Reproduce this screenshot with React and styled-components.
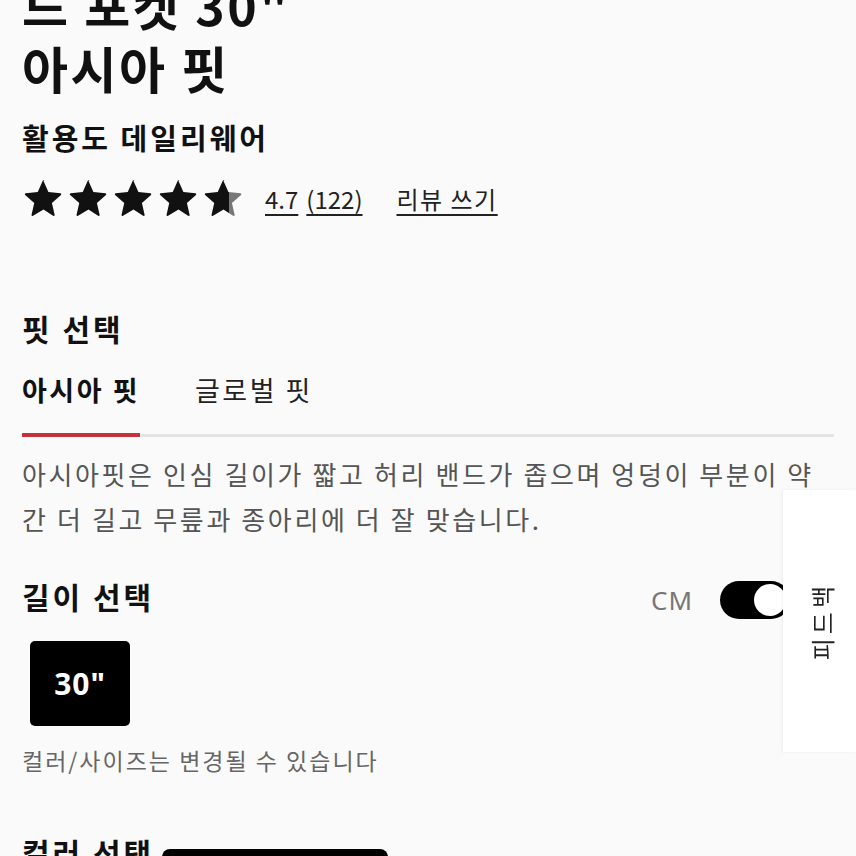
import React from "react"
import styled, { createGlobalStyle } from "styled-components"

const GlobalStyle = createGlobalStyle`
	html, body {
		margin: 0;
		padding: 0;
		background: #fafafa;
	}
	body {
		font-family: "Noto Sans CJK KR", "Noto Sans", sans-serif;
		color: #111;
		overflow: hidden;
	}
`

const Page = styled.div`
	padding: 0 22px;
	width: 856px;
	height: 856px;
	box-sizing: border-box;
	overflow: hidden;
`

const Title = styled.h1`
	margin: -27px 0 0;
	font-size: 50px;
	line-height: 63px;
	font-weight: 700;
	letter-spacing: 2.5px;
`

const SubTitle = styled.h2`
	margin: 18px 0 0;
	font-size: 29px;
	line-height: 40px;
	font-weight: 700;
	letter-spacing: 3px;
`

const RatingRow = styled.div`
	display: flex;
	align-items: center;
	margin-top: 17px;
	height: 48px;
`

const Stars = styled.div`
	display: flex;
	gap: 2px;
	margin-right: 20px;
`

const LinkText = styled.a`
	font-size: 24px;
	color: #222;
	letter-spacing: ${(p) => p.$spacing ?? 0}px;
	text-decoration: underline;
	text-underline-offset: 5px;
	text-decoration-thickness: 1.5px;
	margin-right: ${(p) => p.$gap || 0}px;
`

const SectionTitle = styled.h3`
	margin: ${(p) => p.$top}px 0 0;
	font-size: 30px;
	line-height: 40px;
	font-weight: 700;
	letter-spacing: 3px;
	white-space: nowrap;
`

const Tabs = styled.div`
	display: flex;
	margin-top: 22px;
	border-bottom: 3px solid #e4e4e4;
`

const Tab = styled.div`
	font-size: 27px;
	line-height: 40px;
	letter-spacing: 2.5px;
	padding-bottom: 23px;
	margin-bottom: -3px;
	font-weight: ${(p) => (p.$active ? 700 : 400)};
	color: ${(p) => (p.$active ? "#111" : "#222")};
	border-bottom: 4px solid ${(p) => (p.$active ? "#c6323c" : "transparent")};
	margin-right: ${(p) => (p.$active ? 55 : 0)}px;
`

const Description = styled.p`
	margin: 14px 0 0;
	font-size: 26px;
	line-height: 45px;
	color: #555;
	letter-spacing: 2.6px;
`

const LengthRow = styled.div`
	display: flex;
	align-items: center;
	justify-content: space-between;
	margin-top: 32px;
	padding-right: 44px;
`

const UnitGroup = styled.div`
	display: flex;
	align-items: center;
	gap: 27px;
	margin-top: 8px;
`

const Unit = styled.span`
	font-size: 26px;
	color: #777;
	letter-spacing: 1px;
	font-family: "Noto Sans", sans-serif;
`

const Toggle = styled.div`
	width: 70px;
	height: 38px;
	border-radius: 19px;
	background: #000;
	display: flex;
	align-items: center;
	justify-content: flex-end;
	padding: 0 4px;
	box-sizing: border-box;
`

const Knob = styled.div`
	width: 32px;
	height: 32px;
	border-radius: 50%;
	background: #fff;
`

const SizeList = styled.div`
	display: flex;
	margin-top: 22px;
	padding-left: 8px;
`

const SizeButton = styled.button`
	width: 100px;
	height: 85px;
	border: none;
	border-radius: 5px;
	background: #000;
	color: #fff;
	font-family: "Noto Sans", sans-serif;
	font-size: 30px;
	font-weight: 700;
	letter-spacing: 1px;
`

const Note = styled.p`
	margin: 16px 0 0;
	font-size: 23px;
	line-height: 36px;
	color: #666;
	letter-spacing: 2px;
`

const ColorRow = styled.div`
	display: flex;
	align-items: flex-start;
	gap: 8px;
	margin-top: 54px;
`

const ColorSwatch = styled.div`
	width: 226px;
	height: 40px;
	border-radius: 8px;
	background: #000;
	margin-top: 17px;
	flex-shrink: 0;
`

const FeedbackTab = styled.div`
	position: fixed;
	right: 0;
	top: 490px;
	width: 73px;
	height: 262px;
	background: #fff;
	box-shadow: -1px 0 3px rgba(0, 0, 0, 0.06);
	display: flex;
	align-items: center;
	justify-content: center;
`

const FeedbackLabel = styled.span`
	writing-mode: vertical-rl;
	text-orientation: sideways;
	transform: rotate(180deg);
	font-size: 24px;
	letter-spacing: 4px;
	color: #222;
	margin-left: 4px;
`

const STAR = "M12 2.2l2.75 6.2 6.7.6c.5.05.7.67.32 1l-5.07 4.45 1.5 6.6c.1.5-.43.88-.87.62L12 18.2l-5.8 3.47c-.44.26-.98-.12-.87-.62l1.5-6.6L1.76 10c-.38-.33-.18-.95.32-1l6.7-.6L11.52 2.2c.2-.46.78-.46.98 0z"

const Star = ({ fill, id }) => (
	<svg width="43" height="43" viewBox="0 0 24 24">
		<defs>
			<linearGradient id={id} x1="0" x2="1" y1="0" y2="0">
				<stop offset={fill} stopColor="#111" />
				<stop offset={fill} stopColor="#777" />
			</linearGradient>
		</defs>
		<path d={STAR} fill={`url(#${id})`} />
	</svg>
)

const App = () => {
	const stars = [1, 1, 1, 1, 0.66]
	return (
		<>
			<GlobalStyle />
			<Page>
				<Title>
					드 포켓 30"
					<br />
					아시아 핏
				</Title>
				<SubTitle>활용도 데일리웨어</SubTitle>
				<RatingRow>
					<Stars>
						{stars.map((f, i) => (
							<Star key={i} fill={f} id={`star-${i}`} />
						))}
					</Stars>
					<LinkText $gap={8}>4.7</LinkText>
					<LinkText $gap={34}>(122)</LinkText>
					<LinkText $spacing={1.5}>리뷰 쓰기</LinkText>
				</RatingRow>

				<SectionTitle $top={86}>핏 선택</SectionTitle>
				<Tabs>
					<Tab $active>아시아 핏</Tab>
					<Tab>글로벌 핏</Tab>
				</Tabs>
				<Description>
					아시아핏은 인심 길이가 짧고 허리 밴드가 좁으며 엉덩이 부분이 약간 더 길고 무릎과 종아리에 더 잘 맞습니다.
				</Description>

				<LengthRow>
					<SectionTitle $top={0}>길이 선택</SectionTitle>
					<UnitGroup>
						<Unit>CM</Unit>
						<Toggle>
							<Knob />
						</Toggle>
					</UnitGroup>
				</LengthRow>
				<SizeList>
					<SizeButton>30"</SizeButton>
				</SizeList>
				<Note>컬러/사이즈는 변경될 수 있습니다</Note>

				<ColorRow>
					<SectionTitle $top={0}>컬러 선택</SectionTitle>
					<ColorSwatch />
				</ColorRow>
			</Page>
			<FeedbackTab>
				<FeedbackLabel>피드백</FeedbackLabel>
			</FeedbackTab>
		</>
	)
}

export default App
